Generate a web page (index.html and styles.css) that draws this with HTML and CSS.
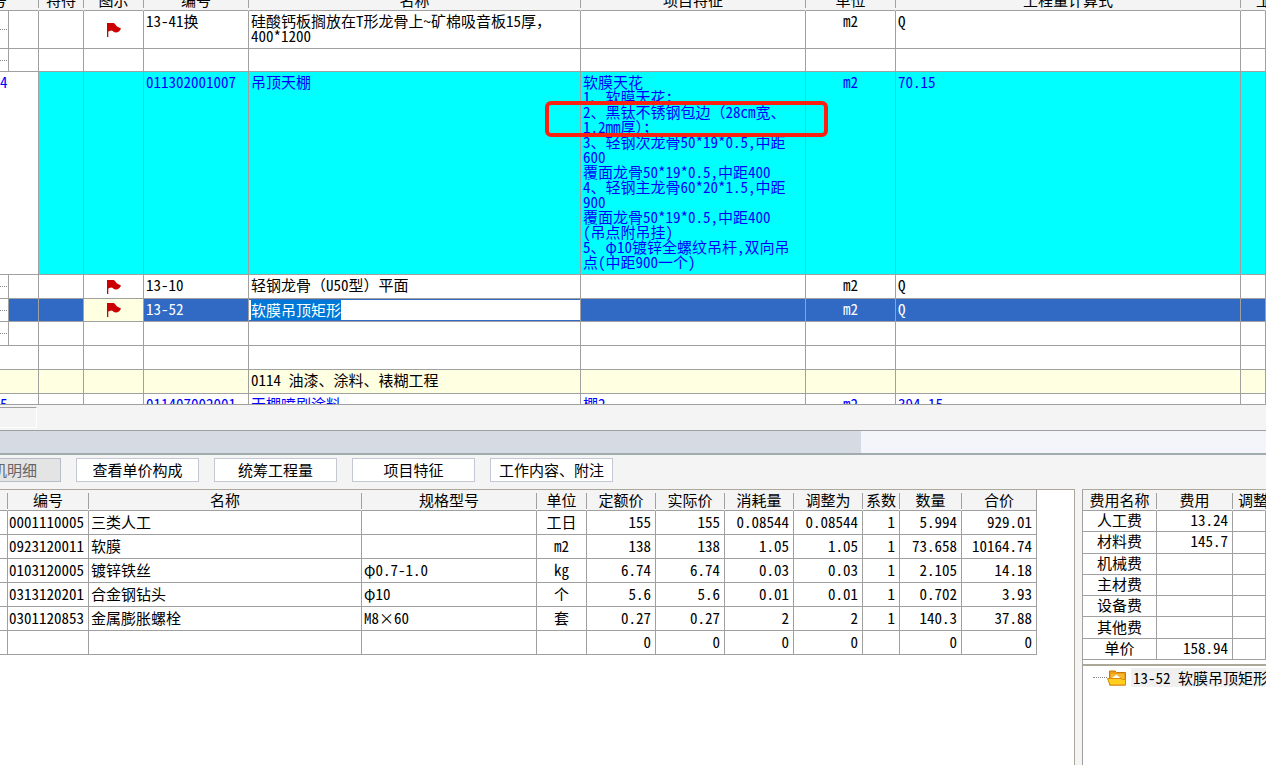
FILE: index.html
```html
<!DOCTYPE html>
<html lang="zh-CN">
<head>
	<meta charset="utf-8">
	<title>分部分项工程量清单</title>
	<link rel="stylesheet" href="styles.css">
	<script type="text/javascript">
	window.onload=function(){
		// 进入编辑状态时选中名称
		var oName=document.getElementById('itemName');
		oName.focus();
		oName.select();
	}
	</script>
</head>
<body>
<svg class="defs" width="0" height="0">
	<symbol id="flag" viewBox="0 0 14 14">
		<path d="M0 0H6C8 0 8.500 2 10 3.500L14 5.500C13 8 11 9.500 9 9.500C6.500 9.500 6 7.500 4 7.500L1.300 8.500V14H0Z" fill="#c00"/>
	</symbol>
</svg>
<div class="app">
	<!-- 清单 -->
	<div class="list">
		<table class="grid bill">
			<colgroup>
				<col class="w-no"><col class="w-mark"><col class="w-icon"><col class="w-code"><col class="w-name"><col class="w-feature"><col class="w-unit"><col class="w-expr"><col>
			</colgroup>
			<thead>
				<tr><th class="left">号</th><th>特待</th><th>图示</th><th>编号</th><th>名称</th><th>项目特征</th><th>单位</th><th>工程量计算式</th><th class="last">工</th></tr>
			</thead>
			<tbody>
				<tr class="double">
					<td class="tree"></td><td></td>
					<td class="flag"><svg><use href="#flag"/></svg></td>
					<td>13-41换</td>
					<td>硅酸钙板搁放在T形龙骨上~矿棉吸音板15厚<span class="full">，</span><br>400*1200</td>
					<td></td><td class="center">m2</td><td>Q</td><td></td>
				</tr>
				<tr class="tight"><td class="tree"></td><td></td><td></td><td></td><td></td><td></td><td></td><td></td><td></td></tr>
				<tr class="item">
					<td class="no">4</td><td></td><td></td>
					<td>011302001007</td>
					<td>吊顶天棚</td>
					<td class="feature">软膜天花<br>1、软膜天花<span class="full">；</span><br>2、黑钛不锈钢包边<span class="full">（</span>28cm宽、<br>1.2mm厚<span class="full">）；</span><br>3、轻钢次龙骨50*19*0.5,中距<br>600<br>覆面龙骨50*19*0.5,中距400<br>4、轻钢主龙骨60*20*1.5,中距<br>900<br>覆面龙骨50*19*0.5,中距400<br>(吊点附吊挂)<br>5、<span class="full">φ</span>10镀锌全螺纹吊杆,双向吊<br>点(中距900一个)<div class="redbox"></div></td>
					<td class="center">m2</td><td>70.15</td><td></td>
				</tr>
				<tr>
					<td class="tree"></td><td></td>
					<td class="flag"><svg><use href="#flag"/></svg></td>
					<td>13-10</td><td>轻钢龙骨<span class="full">（</span>U50型<span class="full">）</span>平面</td><td></td><td class="center">m2</td><td>Q</td><td></td>
				</tr>
				<tr class="tight current">
					<td class="tree"></td><td></td>
					<td class="flag"><svg><use href="#flag"/></svg></td>
					<td>13-52</td>
					<td class="edit"><input type="text" id="itemName" aria-label="名称" value="软膜吊顶矩形"></td>
					<td></td><td class="center">m2</td><td>Q</td><td></td>
				</tr>
				<tr><td class="tree"></td><td></td><td></td><td></td><td></td><td></td><td></td><td></td><td></td></tr>
				<tr><td></td><td></td><td></td><td></td><td></td><td></td><td></td><td></td><td></td></tr>
				<tr class="chapter"><td></td><td></td><td></td><td></td><td>0114 油漆、涂料、裱糊工程</td><td></td><td></td><td></td><td></td></tr>
				<tr class="next"><td class="no">5</td><td></td><td></td><td>011407002001</td><td>天棚喷刷涂料</td><td>棚2</td><td class="center">m2</td><td>394.15</td><td></td></tr>
			</tbody>
		</table>
	</div>
	<div class="foot"><div class="foot-cell"></div></div>
	<div class="scroll"><div class="thumb"></div></div>

	<!-- 明细 -->
	<div class="tabs">
		<button type="button" class="on">人材机明细</button>
		<button type="button">查看单价构成</button>
		<button type="button">统筹工程量</button>
		<button type="button">项目特征</button>
		<button type="button">工作内容、附注</button>
	</div>
	<div class="bottom">
		<div class="detail">
			<table class="grid res">
				<colgroup>
					<col class="w-edge"><col class="w-rcode"><col class="w-rname"><col class="w-spec"><col class="w-runit"><col class="w-price"><col class="w-price"><col class="w-price"><col class="w-price"><col class="w-rate"><col class="w-qty"><col class="w-total">
				</colgroup>
				<thead>
					<tr><th></th><th>编号</th><th>名称</th><th>规格型号</th><th>单位</th><th>定额价</th><th>实际价</th><th>消耗量</th><th>调整为</th><th>系数</th><th>数量</th><th>合价</th></tr>
				</thead>
				<tbody>
					<tr><td></td><td>0001110005</td><td>三类人工</td><td></td><td>工日</td><td>155</td><td>155</td><td>0.08544</td><td>0.08544</td><td>1</td><td>5.994</td><td>929.01</td></tr>
					<tr><td></td><td>0923120011</td><td>软膜</td><td></td><td>m2</td><td>138</td><td>138</td><td>1.05</td><td>1.05</td><td>1</td><td>73.658</td><td>10164.74</td></tr>
					<tr><td></td><td>0103120005</td><td>镀锌铁丝</td><td><span class="full">φ</span>0.7-1.0</td><td>kg</td><td>6.74</td><td>6.74</td><td>0.03</td><td>0.03</td><td>1</td><td>2.105</td><td>14.18</td></tr>
					<tr><td></td><td>0313120201</td><td>合金钢钻头</td><td><span class="full">φ</span>10</td><td>个</td><td>5.6</td><td>5.6</td><td>0.01</td><td>0.01</td><td>1</td><td>0.702</td><td>3.93</td></tr>
					<tr><td></td><td>0301120853</td><td>金属膨胀螺栓</td><td>M8×60</td><td>套</td><td>0.27</td><td>0.27</td><td>2</td><td>2</td><td>1</td><td>140.3</td><td>37.88</td></tr>
					<tr><td></td><td></td><td></td><td></td><td></td><td>0</td><td>0</td><td>0</td><td>0</td><td></td><td>0</td><td>0</td></tr>
				</tbody>
			</table>
		</div>
		<div class="side">
			<table class="grid fee">
				<colgroup><col class="w-fname"><col class="w-fee"><col></colgroup>
				<thead>
					<tr><th>费用名称</th><th>费用</th><th class="last">调整</th></tr>
				</thead>
				<tbody>
					<tr><td>人工费</td><td>13.24</td><td></td></tr>
					<tr><td>材料费</td><td>145.7</td><td></td></tr>
					<tr><td>机械费</td><td></td><td></td></tr>
					<tr><td>主材费</td><td></td><td></td></tr>
					<tr><td>设备费</td><td></td><td></td></tr>
					<tr><td>其他费</td><td></td><td></td></tr>
					<tr><td>单价</td><td>158.94</td><td></td></tr>
				</tbody>
			</table>
			<div class="node">
				<i class="dots"></i>
				<svg class="folder" viewBox="0 0 20 16">
					<path d="M2.500 1H8L9.500 2.500H18.500V15H2.500Z" fill="#f0a010" stroke="#c87808"/>
					<path d="M4 4H17V9H4Z" fill="#f5b830"/>
					<path d="M5 8.500Q6 6 8 6Q9 3.500 11 6Q13 6.500 13 8.500Z" fill="#fff"/>
					<path d="M.5 8.500H14L15.500 9.500H18.500V15H3Z" fill="#ffce1e" stroke="#d88a08"/>
				</svg>
				<span class="label">13-52 软膜吊顶矩形</span>
			</div>
		</div>
	</div>
</div>
</body>
</html>
```
FILE: styles.css
```css
*{
	margin: 0;
	padding: 0;
	box-sizing: border-box;
}
body{
	font: 15px/15px "Noto Sans CJK SC", sans-serif;
	font-feature-settings: "hwid" 1;
	color: #000;
	background: #f4f4f4;
	overflow: hidden;
}
.full{
	font-feature-settings: "fwid" 1;
}
.defs{
	position: absolute;
}
.app{
	height: 100vh;
	display: flex;
	flex-direction: column;
}

/* 表格公用 */
.grid{
	table-layout: fixed;
	border-collapse: separate;
	border-spacing: 0;
}
.grid th,.grid td{
	border-right: 1px solid #a0a0a0;
	border-bottom: 1px solid #a0a0a0;
	white-space: nowrap;
}
.grid th{
	padding-bottom: 2px;
	font-weight: normal;
	border-right-color: transparent;
	background: #f4f4f4 linear-gradient(#a0a0a0,#a0a0a0) right center/1px 16px no-repeat border-box;
}
.grid td{
	padding: 0 2px;
}
.grid .center{
	text-align: center;
}

/* 清单 */
.list{
	flex: none;
	height: 405px;
	overflow: hidden;
	background: #fff;
	border-bottom: 1px solid #a0a0a0;
}
.bill{
	width: calc(100% + 8px);
	margin: -11px 0 0 -8px;
}
.bill th{
	height: 22px;
	padding-bottom: 0;
}
.bill .left{
	text-align: left;
}
.bill td{
	height: 24px;
	padding: 2px;
	vertical-align: top;
}
.bill .double td{
	height: 38px;
}
.bill .tight td{
	height: 23px;
}
.bill .item td{
	height: 203px;
}
.w-no{ width: 47px; }
.w-mark{ width: 45px; }
.w-icon{ width: 60px; }
.w-code{ width: 105px; }
.w-name{ width: 332px; }
.w-feature{ width: 225px; }
.w-unit{ width: 90px; }
.w-expr{ width: 345px; }
.bill .last{
	padding-left: 15px;
	text-align: left;
}
.bill .tree{
	background-image: linear-gradient(#a0a0a0,#a0a0a0), repeating-linear-gradient(90deg,#888 0 1px,#fff 1px 2px), linear-gradient(#fff,#fff);
	background-position: 16px 0, 0 50%, 0 0;
	background-size: 1px 100%, 15px 1px, 16px 100%;
	background-repeat: no-repeat;
}
.bill .flag{
	text-align: center;
	vertical-align: middle;
	padding: 0;
}
.flag svg{
	display: block;
	width: 14px;
	height: 14px;
	margin: 0 auto;
}
.item td{
	color: #00f;
	background: #0ff;
}
.item .no{
	background: #fff;
}
.bill .no{
	padding-left: 8px;
}
.item .feature{
	position: relative;
}
.redbox{
	position: absolute;
	left: -36px;
	top: 29px;
	width: 283px;
	height: 36px;
	border: 4px solid #fc2010;
	border-radius: 6px;
}
.current td{
	color: #fff;
	background-color: #316ac5;
}
.current .flag{
	background: #ffffe1;
}
.bill .edit{
	padding: 0;
}
.edit input{
	display: block;
	width: 100%;
	height: 22px;
	padding: 0 2px 2px;
	border: solid #316ac5;
	border-width: 1px 0;
	outline: none;
	font: inherit;
	font-feature-settings: inherit;
	color: #000;
	background: #fff;
}
.edit input::selection{
	color: #fff;
	background: #0078d7;
}
.chapter td{
	background: #ffffe1;
}
.next td{
	color: #00f;
}

.foot{
	flex: none;
	height: 25px;
	padding-top: 2px;
}
.foot-cell{
	width: 37px;
	height: 21px;
	border: 1px solid #fff;
	border-top-color: #a0a0a0;
	border-left: 0;
}
.scroll{
	flex: none;
	height: 25px;
	border-top: 1px solid #a0a0a0;
	border-bottom: 2px solid #a0abae;
	background: #f4f5fa;
}
.thumb{
	width: 68%;
	height: 100%;
	background: #d6dae3;
}

/* 明细 */
.tabs{
	flex: none;
	display: flex;
	gap: 15px;
	height: 34px;
	padding-top: 3px;
	margin-left: -62px;
}
.tabs button{
	width: 123px;
	height: 24px;
	padding-bottom: 2px;
	border: 1px solid #c4c8d4;
	font: inherit;
	color: #000;
	background: #fff;
}
.tabs .on{
	color: #666;
	background: #e4e4e4;
	border-color: #b8bcc8;
	text-align: right;
	padding-right: 23px;
}
.bottom{
	flex: 1;
	display: flex;
	gap: 7px;
	min-height: 0;
}
.detail{
	flex: 1;
	background: #fff;
	border-top: 1px solid #aca899;
	border-right: 1px solid #aca899;
}
.res{
	width: 1037px;
}
.res th,.fee th{
	height: 21px;
}
.res th:last-child{
	border-right-color: #a0a0a0;
}
.res td{
	height: 24px;
	text-align: right;
	padding: 0 4px 3px 2px;
}
.res td:nth-child(2),.res td:nth-child(3),.res td:nth-child(4){
	text-align: left;
}
.res td:nth-child(2){
	padding: 0 1px 3px;
}
.res td:nth-child(5){
	text-align: center;
	padding: 0 0 3px;
}
.w-edge{ width: 8px; }
.w-rcode{ width: 81px; }
.w-rname{ width: 273px; }
.w-spec{ width: 175px; }
.w-runit{ width: 50px; }
.w-price{ width: 69px; }
.w-rate{ width: 37px; }
.w-qty{ width: 62px; }
.w-total{ width: 75px; }

.side{
	flex: none;
	width: 184px;
	overflow: hidden;
	background: #fff;
	border-top: 1px solid #aca899;
	border-left: 1px solid #a0a0a0;
}
.fee{
	width: 100%;
	height: 170px;
}
.w-fname{ width: 74px; }
.w-fee{ width: 76px; }
.fee .last{
	text-align: left;
	padding-left: 5px;
}
.fee td{
	text-align: center;
	padding: 0 0 3px;
}
.fee td:nth-child(2){
	text-align: right;
	padding-right: 4px;
}
.node{
	display: flex;
	align-items: center;
	margin-top: 4px;
	padding: 2px 0 0 10px;
	border-top: 2px solid #aca899;
	white-space: nowrap;
}
.dots{
	flex: none;
	width: 14px;
	border-top: 1px dotted #888;
}
.folder{
	flex: none;
	width: 20px;
	height: 16px;
	margin-right: 4px;
}
.label{
	padding: 2px;
	background: #f0f0f0;
}
```
